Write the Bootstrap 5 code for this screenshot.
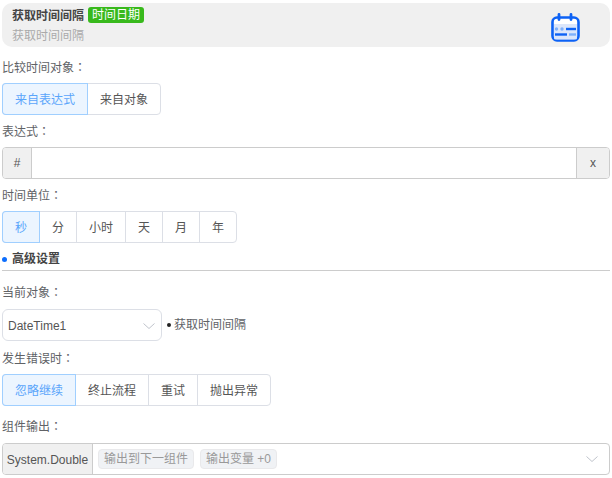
<!DOCTYPE html>
<html lang="zh"><head><meta charset="utf-8">
<link rel="stylesheet" href="https://cdn.jsdelivr.net/npm/bootstrap@5.3.0/dist/css/bootstrap.min.css">
<style>
html,body{margin:0;background:#fff}
body{width:612px;height:478px;overflow:hidden;padding:3px 2px 0;font:12px/16px "Liberation Sans","Noto Sans CJK SC",sans-serif;color:#606266}
.hdr{height:44px;background:#f0f0f0;border-radius:10px;padding:4px 40px 0 10px;position:relative}
.hdr-title{font-weight:700;color:#444;height:16px;line-height:18px}
.tagc{display:inline-block;background:#38b91c;color:#fff;font-weight:400;font-size:12px;line-height:16px;height:16px;padding:0 4px;border-radius:3px;margin-left:4px;vertical-align:top}
.hdr-sub{color:#aaa;margin-top:5px;height:16px;line-height:16px}
.hdr svg{position:absolute;left:548px;top:9px}
.lbl{height:16px;line-height:16px;color:#606266}
.cln{font-family:"Noto Sans CJK TC",sans-serif}
.seg{display:flex;height:32px;border:1px solid #dcdfe6;border-radius:4px;background:#fff}
.seg span{display:flex;align-items:center;justify-content:center;border-left:1px solid #dcdfe6;color:#555;height:30px;padding-top:2px}
.seg span:first-child{border-left:0;border-radius:3px 0 0 3px}
.seg .on{background:#ecf5ff;color:#5aa5fb;box-shadow:0 0 0 1px #a0cfff;position:relative}
.ig{display:flex;height:32px;border:1px solid #ccc;border-radius:4px;width:608px;color:#555}
.ig .pre{background:#f0f0f0;display:flex;align-items:center;justify-content:center;border-radius:3px 0 0 3px;border-right:1px solid #ccc}
.ig .suf{background:#f0f0f0;width:33px;display:flex;align-items:center;justify-content:center;border-left:1px solid #ccc;border-radius:0 3px 3px 0;margin-left:auto}
.sect{height:16px;line-height:16px;font-weight:700;color:#444;display:flex;align-items:center}
.dot{width:5px;height:5px;background:#0d6efd;border-radius:50%;margin-right:5px}
.rule{height:1px;background:#ccc;width:608px}
.sel{width:160px;height:32px;border:1px solid #dcdfe6;border-radius:6px;display:flex;align-items:center;padding:2px 5px 0;color:#555;justify-content:space-between}
.objn{color:#606266;display:flex;align-items:center;margin-left:5px;margin-top:-1px}
.objn i{width:4px;height:4px;border-radius:50%;background:#222;margin-right:3px;display:block}
.chip{background:#f0f2f5;border:1px solid #e9e9eb;border-radius:4px;color:#999;height:20px;line-height:18px;padding:0 5px;margin-left:5px}
</style></head><body>
<div class="hdr">
  <div class="hdr-title">获取时间间隔<span class="tagc">时间日期</span></div>
  <div class="hdr-sub">获取时间间隔</div>
  <svg width="30" height="30" viewBox="0 0 30 30" fill="none"><rect x="2.500" y="5.500" width="26" height="23" rx="4.500" fill="#fff" stroke="#0d62f5" stroke-width="2.600"/><path d="M9 2.500v5M21 2.500v5" stroke="#0d62f5" stroke-width="2.800" stroke-linecap="round"/><path d="M4 12h23v14a1.500 1.500 0 0 1-1.500 1.500h-20A1.500 1.500 0 0 1 4 26z" fill="#dbe6fb"/><circle cx="6.500" cy="17" r="1.700" fill="#7fb0fb"/><circle cx="12" cy="17" r="1.700" fill="#7fb0fb"/><path d="M16 17h10" stroke="#0d62f5" stroke-width="2.400"/><path d="M5 22.500h12" stroke="#0d62f5" stroke-width="2.400"/><path d="M19 22.500h7" stroke="#7fb0fb" stroke-width="2.400"/></svg>
</div>
<div class="lbl" style="margin-top:12px">比较时间对象<span class="cln" lang="zh-Hant">：</span></div>
<div class="seg" style="margin-top:8px;width:159px"><span class="on" style="width:84px">来自表达式</span><span style="width:73px">来自对象</span></div>
<div class="lbl" style="margin-top:8px">表达式<span class="cln" lang="zh-Hant">：</span></div>
<div class="ig" style="margin-top:8px"><span class="pre" style="width:29px">#</span><span class="suf">x</span></div>
<div class="lbl" style="margin-top:8px">时间单位<span class="cln" lang="zh-Hant">：</span></div>
<div class="seg" style="margin-top:8px;width:235px"><span class="on" style="width:36px">秒</span><span style="width:37px">分</span><span style="width:49px">小时</span><span style="width:37px">天</span><span style="width:37px">月</span><span style="width:37px">年</span></div>
<div class="sect" style="margin-top:8px"><i class="dot"></i>高级设置</div>
<div class="rule" style="margin-top:3px"></div>
<div class="lbl" style="margin-top:13px">当前对象<span class="cln" lang="zh-Hant">：</span></div>
<div class="d-flex" style="margin-top:9px"><div class="sel">DateTime1<svg style="margin-right:1px" width="12" height="8" viewBox="0 0 12 8" fill="none"><path d="M.5 1.500l5.500 5 5.500-5" stroke="#c0c4cc"/></svg></div><div class="objn"><i></i>获取时间间隔</div></div>
<div class="lbl" style="margin-top:9px">发生错误时<span class="cln" lang="zh-Hant">：</span></div>
<div class="seg" style="margin-top:8px;width:269px"><span class="on" style="width:72px">忽略继续</span><span style="width:73px">终止流程</span><span style="width:49px">重试</span><span style="width:73px">抛出异常</span></div>
<div class="lbl" style="margin-top:12px">组件输出<span class="cln" lang="zh-Hant">：</span></div>
<div class="ig" style="margin-top:9px;align-items:center"><span class="pre" style="width:90px;height:30px;padding-top:1px">System.Double</span><span class="chip">输出到下一组件</span><span class="chip" style="margin-left:6px">输出变量 +0</span><svg style="margin-left:auto;margin-right:11px" width="12" height="8" viewBox="0 0 12 8" fill="none"><path d="M.5 1.500l5.500 5 5.500-5" stroke="#c0c4cc"/></svg></div>
</body></html>
